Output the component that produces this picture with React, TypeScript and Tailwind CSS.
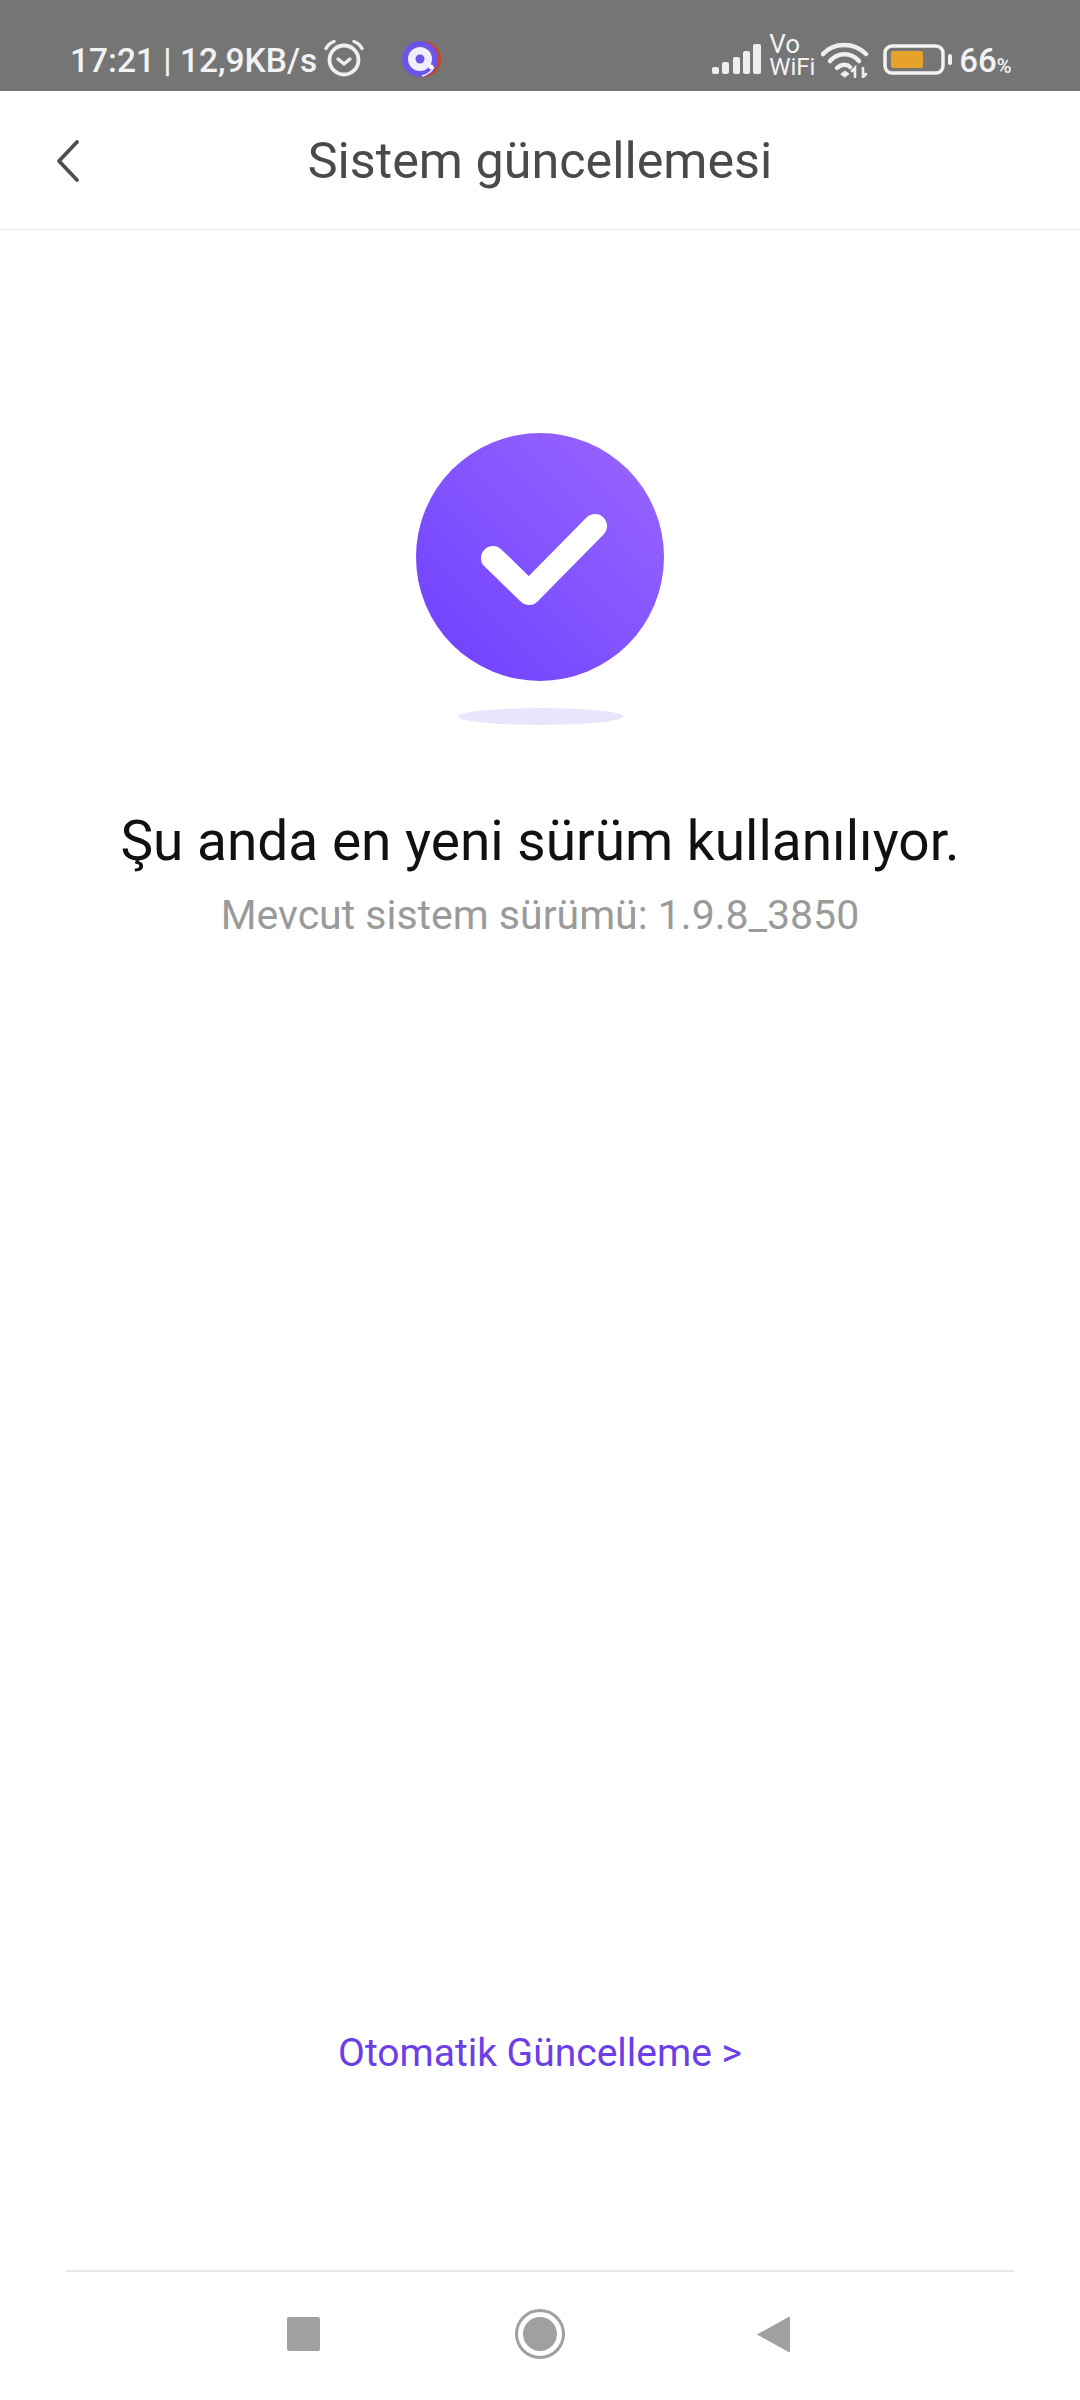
export default function App() {
  return (
    <div className="flex h-[2400px] w-[1080px] flex-col overflow-hidden bg-white font-['Roboto',sans-serif]">
      {/* status bar */}
      <div className="flex h-[91px] shrink-0 items-end bg-[#757575] pb-[11px] pl-[70px] text-[#f2f2f2]">
        <span className="text-[33.5px] leading-[38px] font-medium whitespace-nowrap">17:21 | 12,9KB/s</span>
        <svg className="ml-[6px] mb-[3px]" width="42" height="38" viewBox="0 0 42 38" fill="none" stroke="#efefef" strokeLinecap="round">
          <circle cx="21" cy="21" r="14.5" strokeWidth="3.8" />
          <path d="M15 20l6 5 6-5" strokeWidth="3.2" strokeLinejoin="round" />
          <path d="M3 9.5C5 6 8 3.5 11 2.5M39 9.5C37 6 34 3.5 31 2.5" strokeWidth="3.4" />
        </svg>
        <svg className="ml-[37px] mb-[2px]" width="40" height="38" viewBox="0 0 40 38">
          <circle cx="21" cy="19" r="18" fill="#c9471c" />
          <circle cx="18" cy="19" r="18" fill="#6a55e8" />
          <circle cx="18" cy="19" r="12" fill="#f1eefc" />
          <circle cx="18" cy="19" r="4.5" fill="#6a55e8" />
          <path d="M32 27a18 18 0 0 1-12 9" stroke="#fff" strokeWidth="1.5" fill="none" />
          <circle cx="29" cy="27" r="2.4" fill="#fff" />
        </svg>
        <svg className="ml-[270px] mb-[5px]" width="49" height="31" viewBox="0 0 49 31" fill="#efefef">
          <rect x="0" y="23" width="7" height="7" rx="2" />
          <rect x="10" y="18" width="7" height="12" rx="2" />
          <rect x="21" y="13" width="7" height="17" rx="2" />
          <rect x="31" y="7" width="7" height="23" rx="2" />
          <rect x="41" y="0" width="8" height="30" rx="2" />
        </svg>
        <div className="mb-[1px] ml-[8px] flex w-[44px] flex-col font-normal">
          <span className="h-[22px] text-[26px] leading-[22px]">Vo</span>
          <span className="h-[24px] text-[24px] leading-[24px]">WiFi</span>
        </div>
        <svg className="ml-[8px] mb-[2px]" width="48" height="37" viewBox="0 0 48 37" fill="none" stroke="#efefef" strokeLinecap="round">
          <path d="M2 13C13 1 33 1 45 13" strokeWidth="4.5" />
          <path d="M9 20C17 11 30 11 38 20" strokeWidth="4.5" />
          <path d="M16 27c4-4 10-4 13-1" strokeWidth="4.5" />
          <path d="M20 33l4-3 4 3-4 3z" fill="#efefef" strokeWidth="1" />
          <path d="M34 36v-9l-3 3M42 27v9l3-3" strokeWidth="2.6" />
        </svg>
        <svg className="ml-[14px] mb-[5px]" width="70" height="31" viewBox="0 0 70 31" fill="none">
          <rect x="2" y="2" width="58" height="27" rx="7" stroke="#f2f2f2" strokeWidth="3.5" />
          <rect x="8" y="7" width="32" height="17" rx="2" fill="#e6a22b" />
          <rect x="65" y="10" width="4" height="11" rx="2" fill="#f2f2f2" />
        </svg>
        <span className="ml-[6px] text-[33px] leading-[38px] font-medium">66</span>
        <span className="mb-[2px] text-[20px] leading-[24px] font-medium">%</span>
      </div>

      {/* header */}
      <div className="relative flex h-[139px] shrink-0 items-center justify-center border-b border-[#e4e8ea]">
        <svg className="absolute top-[48px] left-[56px]" width="24" height="44" viewBox="0 0 24 44" fill="none" stroke="#4f4f4f" strokeWidth="3.8" strokeLinecap="round" strokeLinejoin="round">
          <path d="M21 3L3 22 21 41" />
        </svg>
        <span className="mt-[2px] text-[50.3px] leading-[56px] font-normal text-[#4a4a4a]">Sistem güncellemesi</span>
      </div>

      {/* main */}
      <div className="flex flex-1 flex-col items-center">
        <div className="mt-[203px] flex h-[248px] w-[248px] items-center justify-center rounded-full bg-gradient-to-tr from-[#6d3dff] to-[#9b66ff]">
          <svg width="248" height="248" viewBox="0 0 248 248" fill="none" stroke="#fff" strokeWidth="24" strokeLinecap="round" strokeLinejoin="round">
            <path d="M77 125L113 160 179 93" />
          </svg>
        </div>
        <div className="mt-[27px] h-[17px] w-[165px] rounded-[50%] bg-[#eae4fc]" />
        <div className="mt-[84px] text-[55px] leading-[64px] font-normal whitespace-nowrap text-[#111111]">Şu anda en yeni sürüm kullanılıyor.</div>
        <div className="mt-[18px] text-[41px] leading-[48px] font-normal whitespace-nowrap text-[#9a9a9a]">Mevcut sistem sürümü: 1.9.8_3850</div>
        <div className="mt-auto mb-[194px] text-[39px] leading-[46px] font-normal whitespace-nowrap text-[#6b3ee8]">Otomatik Güncelleme &gt;</div>
      </div>

      {/* nav */}
      <div className="mx-[66px] flex h-[130px] shrink-0 items-start border-t-2 border-[#e8e8e8]">
        <div className="mt-[45px] ml-[221px] h-[34px] w-[33px] rounded-[2px] bg-[#a0a0a0]" />
        <svg className="mt-[37px] ml-[195px]" width="50" height="50" viewBox="0 0 50 50">
          <circle cx="25" cy="25" r="23.5" fill="none" stroke="#a0a0a0" strokeWidth="3" />
          <circle cx="25" cy="25" r="17" fill="#a0a0a0" />
        </svg>
        <svg className="mt-[44px] ml-[191px]" width="34" height="37" viewBox="0 0 34 37">
          <path d="M1 18.5L32.5 1a1 1 0 0 1 1.5 1V35a1 1 0 0 1-1.5 1z" fill="#a0a0a0" />
        </svg>
      </div>
    </div>
  );
}
